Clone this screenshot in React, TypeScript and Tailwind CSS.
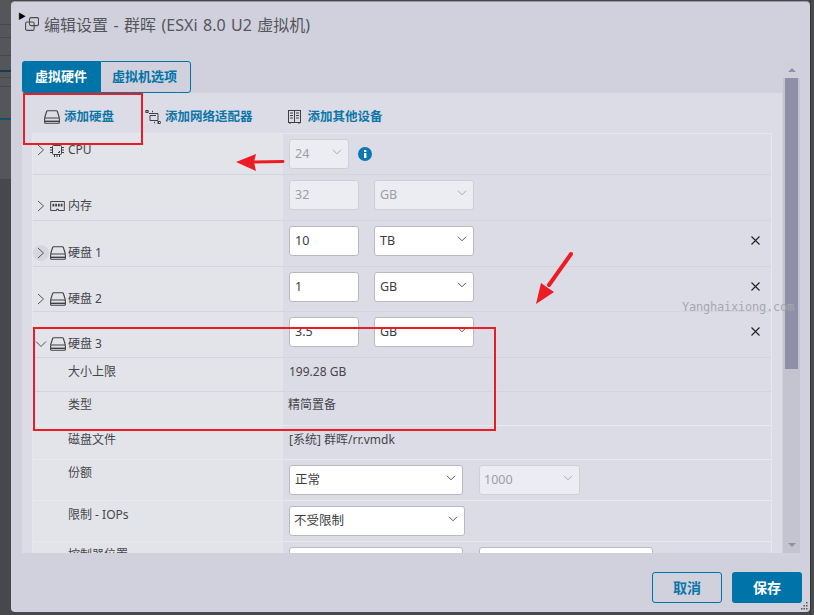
import React from "react";

const font = { fontFamily: '"Noto Sans", "Noto Sans CJK SC", sans-serif' };

function Chevron({ open = false, className = "" }: { open?: boolean; className?: string }) {
  return (
    <svg width="12" height="12" viewBox="0 0 12 12" fill="none" stroke="#55565c" strokeWidth="1" className={className}>
      {open ? <path d="M1 3.5 L6 8.5 L11 3.5" /> : <path d="M3 1 L8.5 6 L3 11" />}
    </svg>
  );
}

function SmallChevron({ color = "#55565c" }: { color?: string }) {
  return (
    <svg width="10" height="6" viewBox="0 0 10 6" fill="none" stroke={color} strokeWidth="1" className="-mt-[4px]">
      <path d="M1 .8 L5 4.8 L9 .8" />
    </svg>
  );
}

function DiskIcon({ color = "#3f4046" }: { color?: string }) {
  return (
    <svg width="16" height="14" viewBox="0 0 16 14" fill="none" stroke={color} strokeWidth="1.1">
      <path d="M.6 8 L2.6 1.5 Q2.9 .8 3.6 .8 H12.4 Q13.1 .8 13.4 1.5 L15.4 8" />
      <rect x=".6" y="8" width="14.8" height="5.2" rx="1" />
      <path d="M1 11.3 H15" strokeWidth="1.4" />
    </svg>
  );
}

function CpuIcon() {
  return (
    <svg width="14" height="14" viewBox="0 0 14 14" fill="none" stroke="#3f4046" strokeWidth="1">
      <rect x="2.5" y="2.5" width="9" height="9" rx="1" />
      <path d="M0 4.5H2M0 7H2M0 9.5H2M12 4.5H14M12 7H14M12 9.5H14M4.5 0V2M7 0V2M9.5 0V2M4.5 12V14M7 12V14M9.5 12V14" />
      <path d="M8 9.5 H9.5 V8" />
    </svg>
  );
}

function MemoryIcon() {
  return (
    <svg width="15" height="10" viewBox="0 0 16 11" fill="none" stroke="#3f4046" strokeWidth="1.1">
      <path d="M.5 .5 H15.5 V10.5 H9 V9 H7 V10.5 H.5 Z" />
      <path d="M3.5 3 V6M6.5 3 V6M9.5 3 V6M12.5 3 V6" strokeWidth="2" />
    </svg>
  );
}

function NetIcon() {
  return (
    <svg width="16" height="14" viewBox="0 0 16 14" fill="none" stroke="#3f4046" strokeWidth="1">
      <path d="M4 3.5 H13 V10.5 H5 V5.5 H11" />
      <path d="M.5 1.5 H4M7 1.5H9M13 12.5H15.5M9 12.5H11" strokeDasharray="1 1" strokeWidth="1.4" />
      <rect x="1" y=".5" width="2" height="2" />
      <rect x="13" y="11.5" width="2" height="2" />
    </svg>
  );
}

function DeviceIcon() {
  return (
    <svg width="13" height="14" viewBox="0 0 13 14" fill="none" stroke="#3f4046" strokeWidth="1">
      <rect x=".5" y=".5" width="12" height="12" />
      <path d="M6.5 .5 V12.5" />
      <path d="M2 3H5M2 5.5H5M2 8H5M8 3H11M8 5.5H11M8 8H11" strokeWidth="1" />
      <path d="M2 12.5 V14M11 12.5 V14" />
    </svg>
  );
}

function Input({ value, disabled = false }: { value: string; disabled?: boolean }) {
  return (
    <div
      className={`w-[70px] h-[30px] rounded-[3px] border flex items-center px-[5px] text-[12.5px] ${
        disabled ? "bg-[#ecedf2] border-[#cfd0d6] text-[#9d9ea4]" : "bg-white border-[#b9b9bf] text-[#3c3c40]"
      }`}
    >
      {value}
    </div>
  );
}

function Select({
  value,
  w,
  disabled = false,
  pl = "pl-[5px]",
}: {
  value?: string;
  w: string;
  disabled?: boolean;
  pl?: string;
}) {
  return (
    <div
      className={`${w} h-[30px] rounded-[3px] border flex items-center justify-between ${pl} pr-[6px] text-[12.5px] ${
        disabled ? "bg-[#ecedf2] border-[#cfd0d6] text-[#9d9ea4]" : "bg-white border-[#b9b9bf] text-[#3c3c40]"
      }`}
    >
      <span>{value}</span>
      <SmallChevron color={disabled ? "#a9aab0" : "#55565c"} />
    </div>
  );
}

function Row({
  h,
  labelPad,
  label,
  icon,
  chevron,
  open,
  hover,
  right,
  line = "border-[#d3d4dc]",
}: {
  h: string;
  labelPad: string;
  label: string;
  icon?: React.ReactNode;
  chevron?: boolean;
  open?: boolean;
  hover?: boolean;
  right?: React.ReactNode;
  line?: string;
}) {
  return (
    <div className={`${h} shrink-0 flex border-b ${line}`}>
      <div className={`w-[250px] shrink-0 bg-[#e3e4ea] ${labelPad} pl-[2px] flex items-start text-[12px] leading-[20px] text-[#45464b]`}>
        <div className="w-[15px] h-[20px] flex items-center justify-start relative">
          {hover && <div className="absolute -left-[2px] top-[2px] w-[16px] h-[16px] rounded-full bg-[#d6d7de]" />}
          {chevron && <Chevron open={open} className="relative" />}
        </div>
        <div className="w-[18px] h-[20px] flex items-center">{icon}</div>
        <span>{label}</span>
      </div>
      <div className="flex-1 min-w-0 relative">{right}</div>
    </div>
  );
}

function Close() {
  return (
    <svg width="9" height="9" viewBox="0 0 9 9" stroke="#222" strokeWidth="1.1" className="absolute left-[468px] top-[15px]">
      <path d="M.5 .5 L8.5 8.5M8.5 .5 L.5 8.5" />
    </svg>
  );
}

function DiskRow({ value, unit }: { value: string; unit: string }) {
  return (
    <div className="h-full pt-[5px] pl-[6px] flex gap-[15px] items-start">
      <Input value={value} />
      <Select value={unit} w="w-[100px]" />
      <Close />
    </div>
  );
}

export default function App() {
  return (
    <div className="relative w-[814px] h-[615px] overflow-hidden bg-[#47484c] flex" style={font}>
      {/* backdrop strip */}
      <div className="w-[11px] shrink-0 flex flex-col">
        <div className="h-[25px] bg-[#55565a] border-b border-[#46474b]" />
        <div className="h-[13px] bg-[#55565a] border-b border-[#46474b]" />
        <div className="h-[18px] bg-[#55565a] border-b border-[#46474b]" />
        <div className="h-[16px] bg-[#55565a] border-b-2 border-[#173a5a]" />
        <div className="h-[6px] bg-[#55565a] border-b border-[#46474b]" />
        <div className="h-[9px] bg-[#55565a] border-b border-[#46474b]" />
        <div className="h-[27px] bg-[#55565a] border-b border-[#3f6a3a]" />
        <div className="h-[6px] bg-[#55565a] border-b-2 border-[#1f4a70]" />
        <div className="h-[60px] bg-[#55565a] border-b border-[#46474b]" />
      </div>

      {/* dialog */}
      <div className="mt-[1px] w-[799px] h-[611px] rounded-[4px] bg-[#d0d1dd] border-t border-[#9a9aa6] flex flex-col shrink-0">
        <div className="h-[59px] shrink-0 pl-[7px] flex items-start">
          <span className="text-[8px] leading-[8px] mt-[10px] text-black">▶</span>
          <svg width="14" height="14" viewBox="0 0 14 14" fill="none" stroke="#4a4b50" strokeWidth="1.1" className="mt-[15px] -ml-[1px]">
            <rect x="4.5" y=".6" width="9" height="8" rx="1.5" />
            <rect x=".6" y="5" width="8.5" height="8.4" rx="1.5" />
          </svg>
          <span className="ml-[5px] mt-[11px] text-[16px] leading-[24px] text-[#55565c] [word-spacing:1.3px]">编辑设置 - 群晖 (ESXi 8.0 U2 虚拟机)</span>
        </div>

        <div className="flex-1 min-h-0 pl-[11px] pr-[10px] flex">
          <div className="w-[760px] flex flex-col h-[492px]">
            {/* tabs */}
            <div className="h-[32px] shrink-0 flex">
              <div className="w-[78px] bg-[#0073a8] rounded-l-[3px] flex items-center justify-center text-[13px] font-bold text-white">虚拟硬件</div>
              <div className="w-[91px] border border-[#0073a8] rounded-r-[3px] pr-[2px] flex items-center justify-center text-[13px] font-bold text-[#0073a8]">虚拟机选项</div>
            </div>
            {/* panel */}
            <div className="flex-1 min-h-0 bg-[#dcdce6] pl-[10px] pr-[10px] flex flex-col overflow-hidden">
              <div className="h-[40px] shrink-0 flex items-center pt-[8px] text-[12.5px] font-semibold text-[#0c76a6]">
                <div className="ml-[12px] flex items-center gap-[4px]">
                  <DiskIcon />
                  <span>添加硬盘</span>
                </div>
                <div className="ml-[31px] flex items-center gap-[4px]">
                  <NetIcon />
                  <span>添加网络适配器</span>
                </div>
                <div className="ml-[35px] flex items-center gap-[7px]">
                  <DeviceIcon />
                  <span>添加其他设备</span>
                </div>
              </div>
              <div className="flex-1 min-h-0 border-t border-x border-[#e6e6ee] flex flex-col overflow-hidden">
                <Row
                  h="h-[41px]"
                  labelPad="pt-[6px]"
                  label="CPU"
                  chevron
                  icon={<CpuIcon />}
                  right={
                    <div className="pl-[6px] pt-[5px] flex items-center gap-[9px]">
                      <Select value="24" w="w-[60px]" disabled />
                      <svg width="14" height="14" viewBox="0 0 14 14">
                        <circle cx="7" cy="7" r="7" fill="#0b78b4" />
                        <rect x="6" y="6" width="2.4" height="5" fill="#fff" />
                        <rect x="6" y="3" width="2.4" height="2" fill="#fff" />
                      </svg>
                    </div>
                  }
                />
                <Row
                  h="h-[46px]"
                  labelPad="pt-[21px]"
                  label="内存"
                  chevron
                  icon={<MemoryIcon />}
                  right={
                    <div className="pl-[6px] pt-[5px] flex gap-[15px]">
                      <Input value="32" disabled />
                      <Select value="GB" w="w-[100px]" disabled />
                    </div>
                  }
                />
                <Row h="h-[46px]" labelPad="pt-[22px]" label="硬盘 1" chevron hover icon={<DiskIcon />} right={<DiskRow value="10" unit="TB" />} />
                <Row h="h-[45px]" labelPad="pt-[22px]" label="硬盘 2" chevron icon={<DiskIcon />} right={<DiskRow value="1" unit="GB" />} />
                <Row h="h-[46px]" labelPad="pt-[22px]" label="硬盘 3" chevron open icon={<DiskIcon />} right={<DiskRow value="3.5" unit="GB" />} />
                <Row h="h-[34px]" labelPad="pt-[4px]" label="大小上限" right={<div className="pl-[6px] pt-[4px] text-[12px] leading-[20px] text-[#45464b]">199.28 GB</div>} />
                <Row h="h-[34px]" labelPad="pt-[3px]" label="类型" line="border-[#e8e8ef]" right={<div className="pl-[5px] pt-[3px] text-[12px] leading-[20px] text-[#45464b]">精简置备</div>} />
                <Row h="h-[34px]" labelPad="pt-[4px]" label="磁盘文件" line="border-[#e8e8ef]" right={<div className="pl-[6px] pt-[4px] text-[12px] leading-[20px] text-[#45464b]">[系统] 群晖/rr.vmdk</div>} />
                <Row
                  h="h-[41px]"
                  labelPad="pt-[3px]"
                  label="份额"
                  line="border-[#e8e8ef]"
                  right={
                    <div className="pl-[6px] pt-[5px] flex gap-[16px]">
                      <Select value="正常" w="w-[174px]" />
                      <Select value="1000" w="w-[101px]" disabled pl="pl-[4px]" />
                    </div>
                  }
                />
                <Row
                  h="h-[41px]"
                  labelPad="pt-[4px]"
                  label="限制 - IOPs"
                  line="border-[#e8e8ef]"
                  right={
                    <div className="pl-[6px] pt-[5px]">
                      <Select value="不受限制" w="w-[176px]" pl="pl-[4px]" />
                    </div>
                  }
                />
                <Row
                  h="h-[41px]"
                  labelPad="pt-[3px]"
                  label="控制器位置"
                  line="border-[#e8e8ef]"
                  right={
                    <div className="pl-[6px] pt-[5px] flex gap-[16px]">
                      <div className="w-[174px] h-[30px] rounded-[3px] border border-[#b9b9bf] bg-white" />
                      <div className="w-[174px] h-[30px] rounded-[3px] border border-[#b9b9bf] bg-white" />
                    </div>
                  }
                />
              </div>
            </div>
          </div>

          {/* scrollbar */}
          <div className="ml-[1px] w-[17px] h-[492px] bg-[#c4c4d1] flex flex-col items-center shrink-0">
            <div className="w-full h-[17px] shrink-0 bg-[#cfd0dc] flex items-center justify-center">
              <div className="w-0 h-0 border-x-[4px] border-x-transparent border-b-[4px] border-b-[#8f8fa8]" />
            </div>
            <div className="w-[13px] h-[291px] bg-[#8f8fa8] shrink-0" />
            <div className="flex-1" />
            <div className="w-full h-[17px] shrink-0 flex items-center justify-center">
              <div className="w-0 h-0 border-x-[4px] border-x-transparent border-t-[4px] border-t-[#8f8fa8]" />
            </div>
          </div>
        </div>

        {/* footer */}
        <div className="h-[59px] shrink-0 flex items-start justify-end gap-[10px] pr-[8px] pt-[19px]">
          <div className="w-[70px] h-[31px] rounded-[3px] border border-[#0073a8] flex items-center justify-center text-[14px] font-bold text-[#0c76a6]">取消</div>
          <div className="w-[70px] h-[31px] rounded-[3px] bg-[#0073a8] flex items-center justify-center text-[14px] font-bold text-white">保存</div>
        </div>
      </div>

      {/* right backdrop strip */}
      <div className="w-[4px] shrink-0 border-l border-[#333438] bg-[#4b4c50]" />

      {/* resize grip */}
      <svg width="8" height="8" viewBox="0 0 8 8" fill="#555" className="absolute left-[801px] top-[602px]">
        <rect x="5" y="0" width="1.5" height="1.5" />
        <rect x="2.5" y="3" width="1.5" height="1.5" />
        <rect x="5" y="3" width="1.5" height="1.5" />
        <rect x="0" y="6" width="1.5" height="1.5" />
        <rect x="2.5" y="6" width="1.5" height="1.5" />
        <rect x="5" y="6" width="1.5" height="1.5" />
      </svg>

      {/* annotations */}
      <div className="absolute left-[23px] top-[93px] w-[120px] h-[52px] border-2 border-[#ed1c24]" />
      <div className="absolute left-[33px] top-[327px] w-[463px] h-[104px] border-2 border-[#ed1c24]" />
      <svg width="814" height="615" className="absolute left-0 top-0 pointer-events-none">
        <path d="M283 161.5 L252 162" stroke="#ed1c24" strokeWidth="3" strokeLinecap="round" />
        <path d="M236 162 L256 154 L254 162 L256 171 Z" fill="#ed1c24" />
        <path d="M571 254 L549 285" stroke="#ed1c24" strokeWidth="4" strokeLinecap="round" />
        <path d="M536 304 L541 283 L548 288 L554 292 Z" fill="#ed1c24" />
      </svg>
      <div
        className="absolute left-[682px] top-[299px] text-[12px] leading-[16px] tracking-[-0.22px] text-[#a8a8ae]"
        style={{ fontFamily: '"DejaVu Sans Mono", monospace' }}
      >
        Yanghaixiong.com
      </div>
    </div>
  );
}
